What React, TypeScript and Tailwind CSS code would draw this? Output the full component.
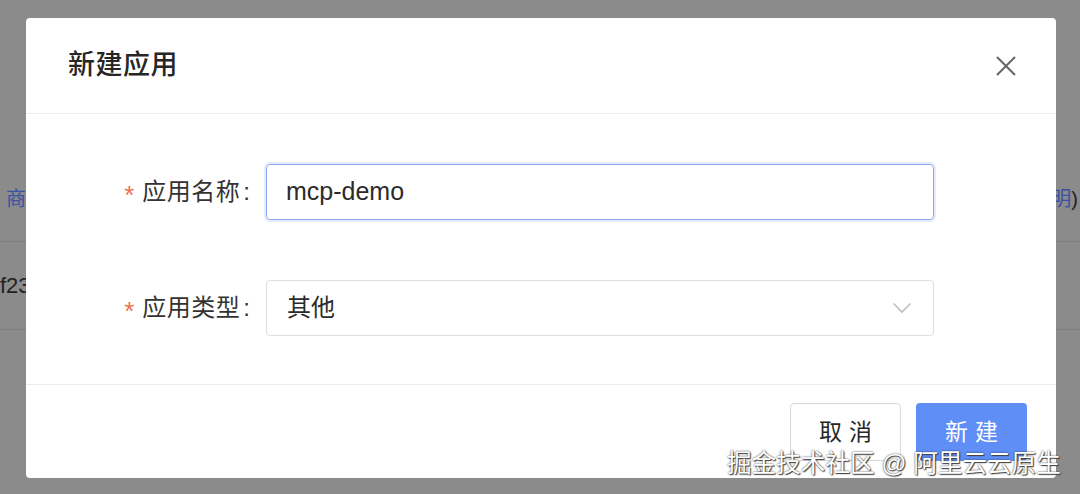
import React from "react";

const font = "font-['Liberation_Sans','Noto_Sans_CJK_SC',sans-serif]";

function Chevron() {
  return (
    <svg width="20" height="12" viewBox="0 0 20 12" fill="none">
      <path d="M1.5 1.5 L10 10 L18.5 1.5" stroke="#bfbfbf" strokeWidth="1.6" />
    </svg>
  );
}

function CloseIcon() {
  return (
    <svg width="22" height="22" viewBox="0 0 22 22" fill="none">
      <path d="M2 2 L20 20 M20 2 L2 20" stroke="#666" strokeWidth="2" />
    </svg>
  );
}

function FormRow({ label, children }: { label: string; children: React.ReactNode }) {
  return (
    <div className="flex items-center">
      <div className="w-[240px] flex justify-end items-center text-[24px] text-[#333] pr-[16px]">
        <span className="text-[#f0704f] mr-[8px] text-[26px] leading-none mt-[6px]">*</span>
        <span className="tracking-[0.5px]">{label}</span>
        <span className="ml-[3px]">:</span>
      </div>
      {children}
    </div>
  );
}

export default function App() {
  return (
    <div className={`${font} relative w-[1080px] h-[494px] overflow-hidden bg-[#8b8b8b]`}>
      {/* page behind the mask */}
      <div className="flex flex-col pt-[166px]">
        <div className="h-[76px] flex items-center justify-between border-b border-[#7f7f7f]">
          <span className="pl-[6px] text-[20px] text-[#3a52a3] -mt-[10px]">商</span>
          <span className="pr-[2px] text-[20px] text-[#3a52a3] -mt-[10px]">明<span className="text-[#222]">)</span></span>
        </div>
        <div className="h-[88px] flex items-center border-b border-[#7f7f7f]">
          <span className="text-[22px] text-[#222]">f23</span>
        </div>
      </div>

      {/* modal */}
      <div className="absolute left-[26px] top-[18px] w-[1030px] h-[460px] bg-white rounded-[4px] flex flex-col">
        <div className="h-[96px] shrink-0 flex items-center justify-between pl-[42px] pr-[39px] border-b border-[#ececec]">
          <span className="text-[27px] font-medium text-[#262626] tracking-[0.5px]">新建应用</span>
          <CloseIcon />
        </div>
        <div className="h-[271px] shrink-0 flex flex-col gap-[60px] pt-[50px] border-b border-[#ececec]">
          <FormRow label="应用名称">
            <div className="w-[668px] h-[56px] rounded-[4px] border border-[#8fa5f2] shadow-[0_0_0_2px_rgba(120,150,240,0.18)] flex items-center px-[19px] text-[25px] text-[#2b2b2b]">
              mcp-demo
            </div>
          </FormRow>
          <FormRow label="应用类型">
            <div className="w-[668px] h-[56px] rounded-[4px] border border-[#dedede] flex items-center justify-between pl-[20px] pr-[21px] text-[24px] text-[#2b2b2b]">
              <span>其他</span>
              <Chevron />
            </div>
          </FormRow>
        </div>
        <div className="flex-1 flex justify-end items-start pt-[18px] pr-[29px] gap-[15px]">
          <button className="w-[111px] h-[58px] rounded-[4px] border border-[#d9d9d9] bg-white text-[23px] text-[#262626] tracking-[7px] pl-[7px]">
            取消
          </button>
          <button className="w-[111px] h-[58px] rounded-[4px] bg-[#5f8ef7] text-[23px] text-white tracking-[7px] pl-[7px]">
            新建
          </button>
        </div>
      </div>

      {/* watermark */}
      <div className="absolute left-[727px] top-[448px] text-[24.6px] leading-[32px] text-white [text-shadow:0_0_2px_#333,1px_1px_1px_#444]">
        掘金技术社区 @ 阿里云云原生
      </div>
    </div>
  );
}
